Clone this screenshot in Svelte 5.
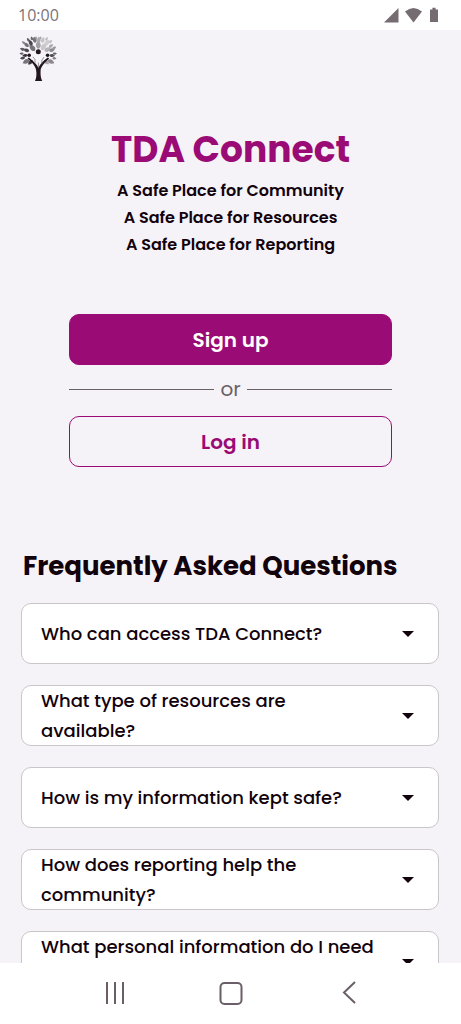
<script lang="ts">
  interface Question {
    text: string
    open: boolean
  }

  let questions: Question[] = $state([
    { text: 'Who can access TDA Connect?', open: false },
    { text: 'What type of resources are available?', open: false },
    { text: 'How is my information kept safe?', open: false },
    { text: 'How does reporting help the community?', open: false },
    { text: 'What personal information do I need to share?', open: false }
  ])

  const taglines = ['Community', 'Resources', 'Reporting']

  // x, y, length, colour: every leaf points away from the crown's centre
  const leaves: [number, number, number, string][] = [
    [14.3, 12.8, 8, '#77737a'],
    [20.3, 9.8, 8, '#a19fa3'],
    [25.6, 11.6, 8, '#c9c7ca'],
    [29.6, 14.4, 7, '#b5b3b6'],
    [12.6, 7.6, 6, '#4d4750'],
    [16.7, 4.8, 6, '#767279'],
    [20.8, 4.6, 6, '#aba9ad'],
    [24.8, 5, 6, '#c6c4c8'],
    [29, 7.8, 7, '#d0ced1'],
    [33, 10.8, 5, '#aaa8ac'],
    [34, 15, 6, '#8f8c91'],
    [36.8, 18.6, 4, '#69646c'],
    [34.2, 20.6, 5, '#555058'],
    [36.4, 23.4, 4, '#858187'],
    [33, 26.6, 7, '#8b878d'],
    [28.6, 27.2, 6, '#aaa7ac'],
    [8, 26.6, 7, '#77737a'],
    [12.4, 27.4, 6, '#3f3942'],
    [4.6, 23, 5, '#4d4750'],
    [7, 20.4, 5, '#393239'],
    [3.6, 18.6, 4, '#625d65'],
    [8.4, 15.2, 6, '#4d4750'],
    [4.4, 14.2, 5, '#625d65'],
    [8.4, 9.8, 6, '#777279'],
    [10.2, 4.8, 4, '#625d65'],
    [13.8, 3.4, 4, '#69646c'],
    [18, 2.8, 3, '#929095'],
    [22.6, 2.8, 3, '#aaa8ac'],
    [28.6, 3.8, 4, '#bdbbbf'],
    [32.6, 6.6, 4, '#bdbbbf'],
    [36.2, 12.8, 4, '#9b989d'],
    [5.6, 7.6, 4, '#8b878d']
  ]

  const tilt = (x: number, y: number) => (Math.atan2(y - 20, x - 20.3) * 180) / Math.PI + 90
</script>

<div class="screen">
  <header class="status">
    <span>10:00</span>
    <svg width="58" height="16" viewBox="0 0 58 16" aria-hidden="true">
      <path d="M1 15.5 15.5 1V15.5Z" />
      <path d="M22 4.6Q30.5-2.8 39 4.6L30.5 15.5Z" />
      <path d="M47 2.5H49.4V.8H52.6V2.5H55V15H47Z" />
    </svg>
  </header>

  <main>
    <svg class="logo" width="40" height="48" viewBox="0 0 40 48" role="img" aria-label="Tree">
      {#each leaves as [x, y, size, color]}
        <path
          fill={color}
          transform="translate({x} {y}) rotate({tilt(x, y)}) scale({size / 6})"
          d="M0-3.2C2.4-.8 2.4 2 0 3 -2.4 2-2.4-.8 0-3.2Z"
        />
      {/each}
      <g class="trunk">
        <circle cx="20.3" cy="16.8" r="2.5" />
        <circle cx="11.2" cy="20.2" r="1.8" />
        <circle cx="29.6" cy="20.3" r="1.8" />
        <path d="M17 46C18.6 43 18.6 39 18.2 35.5 17.8 31.5 14.8 28 9.6 23.4L10.8 22.6C14 25 17.6 28 20.4 32.4 22.8 28 26.4 25 29.8 22.4L31.2 23.4C26.4 28 22.8 31.5 22.6 35.5 22.4 39 22.6 43 24.2 46Z" />
        <path class="twig" d="M20.4 33V27.6M17 28V24.6L15 21.8M23.8 28.4V25.4L26 22" />
      </g>
    </svg>

    <section class="intro">
      <h1>TDA Connect</h1>
      {#each taglines as tagline}
        <p>A Safe Place for {tagline}</p>
      {/each}
    </section>

    <section class="actions">
      <button class="primary">Sign up</button>
      <div class="divider">or</div>
      <button class="outline">Log in</button>
    </section>

    <section class="faq">
      <h2>Frequently Asked Questions</h2>
      {#each questions as question}
        <button aria-expanded={question.open} onclick={() => (question.open = !question.open)}>
          <span>{question.text}</span>
          <svg width="12" height="6" viewBox="0 0 12 6" aria-hidden="true">
            <path d="M0 0H12L6 6Z" />
          </svg>
        </button>
      {/each}
    </section>
  </main>

  <nav>
    <button aria-label="Recent apps">
      <svg width="24" height="24" viewBox="0 0 24 24"><path d="M4 1V23M12 1V23M20 1V23" /></svg>
    </button>
    <button aria-label="Home">
      <svg width="24" height="24" viewBox="0 0 24 24"><rect x="1.5" y="2" width="21" height="21" rx="4" /></svg>
    </button>
    <button aria-label="Back">
      <svg width="24" height="24" viewBox="0 0 24 24"><path d="M21 1 10 11.5 21 22" /></svg>
    </button>
  </nav>
</div>

<style>
  :global(body) {
    margin: 0;
  }

  .screen {
    --accent: #9a0b76;
    --ink: #12020c;
    --muted: #6b6066;
    display: flex;
    flex-direction: column;
    height: 100vh;
    font-family: Poppins, Inter, sans-serif;
    color: var(--ink);
    background: #f5f3f7;
  }

  .status {
    display: flex;
    flex-shrink: 0;
    align-items: center;
    justify-content: space-between;
    height: 30px;
    padding: 0 20px 0 18px;
    font-family: 'Open Sans', sans-serif;
    font-size: 16px;
    line-height: 32px;
    color: #7b7377;
    background: #fff;
  }

  .status svg {
    fill: #756c71;
  }

  main {
    flex: 1;
    min-height: 0;
    overflow-y: auto;
    scrollbar-width: none;
  }

  .logo {
    display: block;
    margin: 5px 18px 0;
  }

  .trunk {
    fill: #21151e;
  }

  .twig {
    fill: none;
    stroke: #817a80;
    stroke-width: 0.8;
  }

  h1,
  h2,
  p {
    margin: 0;
  }

  .intro {
    padding-top: 40px;
    text-align: center;
  }

  h1 {
    font-size: 36px;
    line-height: 54px;
    font-weight: 700;
    color: var(--accent);
  }

  p {
    font-size: 16px;
    line-height: 27px;
    font-weight: 600;
  }

  button {
    font-family: inherit;
    color: inherit;
    cursor: pointer;
  }

  .actions {
    display: flex;
    flex-direction: column;
    padding: 56px 15% 0;
  }

  .actions button {
    height: 51px;
    border: 1px solid var(--accent);
    border-radius: 10px;
    font-size: 20px;
    font-weight: 600;
  }

  .primary {
    color: #fff;
    background: var(--accent);
  }

  .actions .outline {
    color: var(--accent);
    background: transparent;
  }

  .divider {
    display: flex;
    align-items: center;
    gap: 6px;
    margin-bottom: 2px;
    font-size: 20px;
    line-height: 49px;
    color: var(--muted);
  }

  .divider::before,
  .divider::after {
    content: '';
    flex: 1;
    height: 1px;
    background: var(--muted);
  }

  .faq {
    display: flex;
    flex-direction: column;
    gap: 21px;
    padding: 83px 22px 20px 21px;
  }

  h2 {
    padding-left: 2px;
    font-size: 26px;
    line-height: 32px;
    font-weight: 700;
  }

  .faq button {
    display: flex;
    flex-shrink: 0;
    align-items: center;
    justify-content: space-between;
    gap: 24px;
    height: 61px;
    padding: 0 24px 0 19px;
    border: 1px solid #cac5c9;
    border-radius: 10px;
    font-size: 18px;
    line-height: 30px;
    font-weight: 500;
    text-align: left;
    background: #fff;
  }

  .faq svg {
    flex-shrink: 0;
    fill: var(--ink);
  }

  nav {
    display: flex;
    flex-shrink: 0;
    align-items: center;
    justify-content: space-between;
    padding: 12px 21% 13px;
    background: #fff;
  }

  nav button {
    display: flex;
    padding: 6px;
    border: 0;
    background: none;
  }

  nav svg {
    fill: none;
    stroke: #6a5f67;
    stroke-width: 2;
  }
</style>
